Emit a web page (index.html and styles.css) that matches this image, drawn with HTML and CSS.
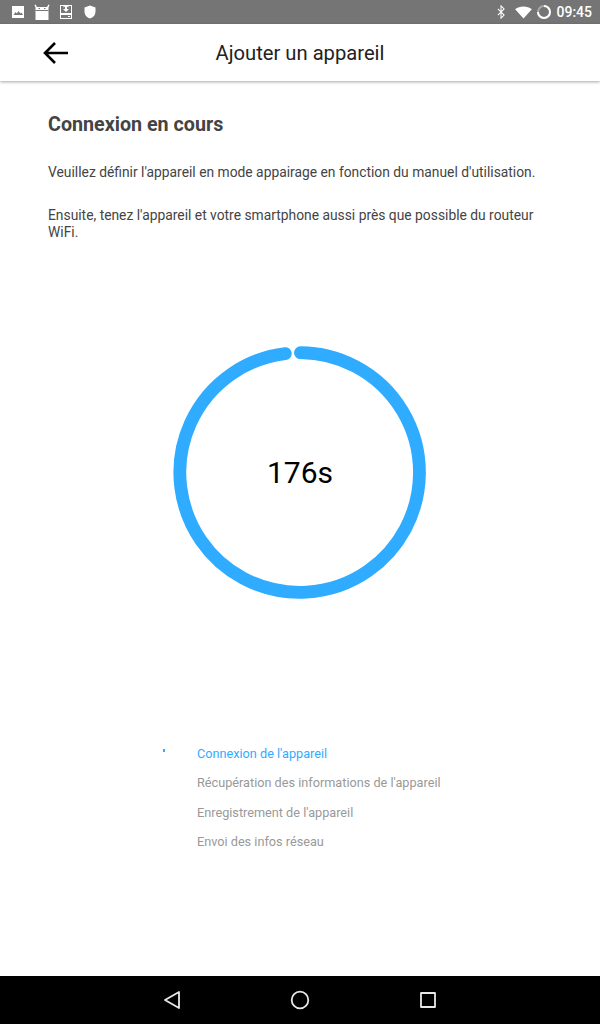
FILE: index.html
```html
<!DOCTYPE html>
<html lang="fr">

<head>
  <meta charset="UTF-8">
  <meta name="viewport" content="width=device-width, initial-scale=1.0">
  <title>Ajouter un appareil</title>
  <link rel="stylesheet" href="styles.css">
</head>

<body>
  <div class="status-bar">
    <div class="status-icons">
      <svg class="icon-16" viewBox="0 0 16 16">
        <path fill="#fff" d="M2 2h12v12H2z" />
        <path fill="#777" d="M3.5 11l2-3 1.3 1.6L8.5 7l2 2.5 1-1 1.5 2.5z" />
      </svg>
      <svg class="icon-16" viewBox="0 0 16 16">
        <path fill="#fff" d="M0.5 1l1-.5L3 3h10L14.500.5l1 .5L14.500 3.500V16h-13V3.500z" />
        <path fill="#777" d="M1.500 6h13v1h-13zM4.500 4h1.500v1H4.500zM10 4h1.500v1H10z" />
      </svg>
      <svg class="icon-16" viewBox="0 0 16 16">
        <path fill="#fff" d="M2 1h12v14H2z" />
        <path fill="#777" d="M3 2h2.500v1.500L7 2.500V2h2v.5l1.500 1V2H13v7H3zM3 11h10v3H3z" />
        <path fill="#fff" d="M7 2h2v3h2L8 8 5 5h2zM10 12h2v1h-2z" />
      </svg>
      <svg class="icon-16" viewBox="0 0 16 16">
        <path fill="#fff" d="M8 1.500l5.500 2v4c0 3.500-2.300 6-5.500 7-3.200-1-5.500-3.500-5.500-7v-4z" />
      </svg>
    </div>
    <div class="status-right">
      <svg class="icon-bt" viewBox="0 0 12 18">
        <path fill="none" stroke="#fff" stroke-width="1.300" d="M2 5l8 8-4 4V1l4 4-8 8" />
      </svg>
      <svg class="icon-wifi" viewBox="0 0 18 14">
        <path fill="#fff" d="M0 3.500C2.500 1.500 5.500.5 9 .5s6.500 1 9 3L9 13.500z" />
      </svg>
      <svg class="icon-sync" viewBox="0 0 16 16">
        <circle cx="8" cy="8" r="6" fill="none" stroke="#a8a8a8" stroke-width="2" />
        <path fill="none" stroke="#fff" stroke-width="2" d="M8 2a6 6 0 1 1-6 6" />
      </svg>
      <span class="clock">09:45</span>
    </div>
  </div>

  <header class="toolbar">
    <svg class="back" viewBox="0 0 28 24">
      <path fill="none" stroke="#000" stroke-width="2.600" d="M26 12H3M13 2L3 12l10 10" />
    </svg>
    <h1>Ajouter un appareil</h1>
  </header>

  <main class="content">
    <h2>Connexion en cours</h2>
    <p class="first">Veuillez définir l'appareil en mode appairage en fonction du manuel d'utilisation.</p>
    <p>Ensuite, tenez l'appareil et votre smartphone aussi près que possible du routeur WiFi.</p>

    <div class="progress">
      <svg viewBox="0 0 254 254">
        <path fill="none" stroke="#2fabff" stroke-width="12.800" stroke-linecap="round"
          d="M127.400 6.700 A119.800 119.800 0 1 1 112.300 7.560" />
      </svg>
      <span class="seconds">176s</span>
    </div>

    <div class="steps">
      <span class="dot"></span>
      <ul>
        <li class="active">Connexion de l'appareil</li>
        <li>Récupération des informations de l'appareil</li>
        <li>Enregistrement de l'appareil</li>
        <li>Envoi des infos réseau</li>
      </ul>
    </div>
  </main>

  <nav class="nav-bar">
    <svg viewBox="0 0 20 20">
      <path fill="none" stroke="#e8e8e8" stroke-width="1.800" stroke-linejoin="round" d="M17 2v16L3 10z" />
    </svg>
    <svg viewBox="0 0 20 20">
      <circle cx="10" cy="10" r="8.300" fill="none" stroke="#e8e8e8" stroke-width="1.800" />
    </svg>
    <svg viewBox="0 0 20 20">
      <path fill="none" stroke="#e8e8e8" stroke-width="1.800" stroke-linejoin="round" d="M3 3h14v14H3z" />
    </svg>
  </nav>
</body>

</html>
```

FILE: styles.css
```css
* {
  box-sizing: border-box;
}

html,
body {
  margin: 0;
  height: 100%;
}

body {
  display: flex;
  flex-direction: column;
  height: 1024px;
  font-family: Roboto, "Liberation Sans", sans-serif;
  background-color: #fff;
  overflow: hidden;
}

.status-bar {
  display: flex;
  justify-content: space-between;
  align-items: center;
  height: 24px;
  padding: 0 8px 0 10px;
  background-color: #757575;
}

.status-icons {
  display: flex;
  gap: 8px;
}

.icon-16 {
  width: 16px;
  height: 16px;
}

.status-right {
  display: flex;
  align-items: center;
}

.icon-bt {
  width: 10px;
  height: 14px;
  margin-right: 9px;
}

.icon-wifi {
  width: 17px;
  height: 13px;
  margin-right: 4px;
}

.icon-sync {
  width: 16px;
  height: 16px;
  margin-right: 4px;
}

.clock {
  color: #fff;
  font-size: 14px;
  font-weight: 500;
}

.toolbar {
  display: flex;
  align-items: center;
  justify-content: center;
  position: relative;
  height: 57px;
  background-color: #fff;
  box-shadow: 0 1px 3px rgba(0, 0, 0, 0.35);
}

.toolbar h1 {
  margin: 0;
  font-size: 20.2px;
  font-weight: 400;
  color: #222;
}

.back {
  position: absolute;
  left: 42px;
  top: 17px;
  width: 28px;
  height: 24px;
}

.content {
  flex: 1;
  padding: 32px 48px 0;
}

.content h2 {
  margin: 0 0 27px;
  font-size: 19.7px;
  line-height: 24px;
  font-weight: 700;
  color: #444;
}

.content p {
  margin: 0;
  font-size: 13.83px;
  line-height: 17px;
  color: #444;
}

.content p.first {
  margin-bottom: 26px;
}

.progress {
  display: flex;
  justify-content: center;
  align-items: center;
  position: relative;
  width: 254px;
  height: 254px;
  margin: 105px auto 0;
}

.progress svg {
  width: 254px;
  height: 254px;
}

.seconds {
  position: absolute;
  margin-bottom: 2px;
  font-size: 30px;
  color: #000;
}

.steps {
  display: flex;
  position: relative;
  margin: 146px 0 0 149px;
}

.dot {
  position: absolute;
  left: -34px;
  top: 3px;
  width: 2px;
  height: 3px;
  background-color: #2fabff;
}

.steps ul {
  margin: 0;
  padding: 0;
  list-style: none;
}

.steps li {
  height: 29.4px;
  font-size: 12.7px;
  line-height: 16px;
  color: #999;
}

.steps li.active {
  color: #2fabff;
}

.nav-bar {
  display: flex;
  justify-content: space-between;
  align-items: center;
  height: 48px;
  padding: 0 162px;
  background-color: #000;
}

.nav-bar svg {
  width: 20px;
  height: 20px;
}
```
